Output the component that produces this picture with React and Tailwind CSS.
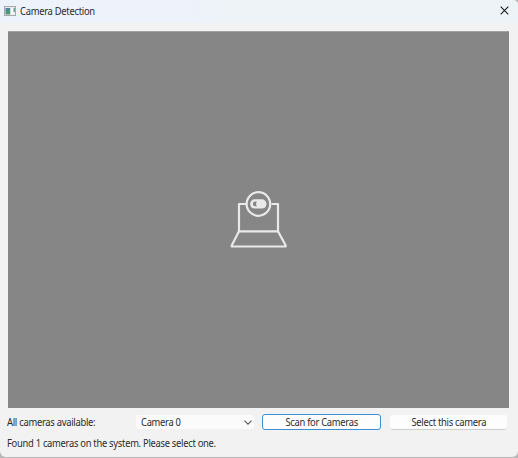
function WindowIcon() {
  return (
    <svg width="12" height="10" viewBox="0 0 12 10" className="shrink-0">
      <defs>
        <linearGradient id="pane" x1="0" y1="0" x2="0.3" y2="1">
          <stop offset="0" stopColor="#4a7fa8" />
          <stop offset="1" stopColor="#4f9f70" />
        </linearGradient>
      </defs>
      <rect x="0.5" y="0.5" width="11" height="9" fill="#e9ebee" stroke="#a5a9ae" />
      <rect x="1.5" y="2" width="5" height="6.5" fill="url(#pane)" />
      <rect x="6.5" y="2" width="3" height="6.5" fill="#fafafa" />
      <rect x="9.5" y="2" width="1.3" height="4" fill="#5b9c86" />
    </svg>
  );
}

function CameraIcon() {
  return (
    <svg width="58" height="58" viewBox="0 0 58 58" fill="none" stroke="#e9e9e9" strokeWidth="2.2" strokeLinejoin="round">
      <path d="M16 14H9V41.3H48V14H41.5" />
      <path d="M9 41.3L1.7 55.5V56.5H55.7V55.5L48 41.3" />
      <circle cx="28.4" cy="14" r="11.8" />
      <rect x="20.1" y="9.3" width="16.4" height="9.2" rx="4.6" fill="#e9e9e9" stroke="none" />
      <path d="M25.3 11.5a2.4 2.4 0 0 0 0 4.8h1.8c-1.4-1.2-1.4-3.6 0-4.8z" fill="#858586" stroke="none" />
    </svg>
  );
}

export default function App() {
  return (
    <div className="h-[458px] w-[518px] overflow-hidden bg-[#b8b8b8] font-['Noto_Sans','Open_Sans',sans-serif] text-[10px] leading-[14px] tracking-[-0.3px] text-[#2c2c2c]">
      <div className="flex h-[457px] flex-col rounded-b-[6px] rounded-tr-[5px] bg-[#f2f2f2]">
        <header className="flex h-[23px] shrink-0 items-center rounded-tr-[5px] bg-linear-to-r from-[#edf2fb] from-35% to-[#edf3f7] to-45% pr-[9px] pb-[2px] pl-[4px]">
          <WindowIcon />
          <span className="ml-[4px] origin-left scale-x-[0.94] whitespace-nowrap">Camera Detection</span>
          <svg width="9" height="9" viewBox="0 0 9 9" className="ml-auto" stroke="#1b1b1b" strokeWidth="1.1">
            <path d="M.7.7L8.3 8.3M8.3.7L.7 8.3" />
          </svg>
        </header>
        <main className="mt-[8px] mr-[9px] ml-[7.5px] flex h-[377px] shrink-0 items-center justify-center border-t border-[#a0a0a0] bg-[#868687] pb-[2px] pl-[1.5px]">
          <CameraIcon />
        </main>
        <div className="mt-[6px] flex h-[16px] items-center pr-[11px] pl-[7px]">
          <span className="w-[129px] shrink-0 origin-left scale-x-[0.94] whitespace-nowrap">All cameras available:</span>
          <div className="flex h-[14px] w-[118px] items-center justify-between rounded-[3px] bg-[#fbfbfb] pr-[2px] pl-[5px]">
            <span className="origin-left scale-x-[0.935]">Camera 0</span>
            <svg width="8" height="5" viewBox="0 0 8 5" fill="none" stroke="#555" strokeWidth="1.1">
              <path d="M.5.6L4 4.1L7.5.6" />
            </svg>
          </div>
          <button className="ml-[8px] h-[16px] w-[119px] rounded-[3px] border border-[#3f8fd0] bg-[#fdfdfd] leading-[14px]">
            <span className="inline-block scale-x-[0.935]">Scan for Cameras</span>
          </button>
          <button className="ml-[9px] h-[15px] w-[117px] rounded-[3px] border-b border-[#cfcfcf] bg-[#fdfdfd] leading-[14px]">
            <span className="inline-block scale-x-[0.94]">Select this camera</span>
          </button>
        </div>
        <p className="mt-[6px] origin-left scale-x-[0.937] pl-[7.5px] whitespace-nowrap">Found 1 cameras on the system. Please select one.</p>
      </div>
    </div>
  );
}
